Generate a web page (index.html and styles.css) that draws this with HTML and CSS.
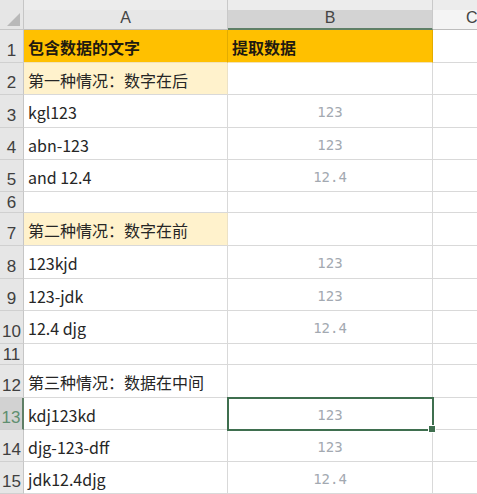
FILE: index.html
```html
<!DOCTYPE html>
<html>
<head>
  <title>提取数据</title>
  <meta name="viewport" content="width=device-width, initial-scale=1.0">
  <link rel="stylesheet" href="styles.css">
</head>
<body>
  <div class="sheet">
    <div class="corner"><span class="tri"></span></div>
    <div class="colhead">A</div>
    <div class="colhead selcol">B</div>
    <div class="colhead lastcol">C</div>

    <div class="rowhead">1</div>
    <div class="cell head">包含数据的文字</div>
    <div class="cell head">提取数据</div>
    <div class="cell end"></div>

    <div class="rowhead">2</div>
    <div class="cell note">第一种情况：数字在后</div>
    <div class="cell"></div>
    <div class="cell end"></div>

    <div class="rowhead">3</div>
    <div class="cell">kgl123</div>
    <div class="cell num">123</div>
    <div class="cell end"></div>

    <div class="rowhead">4</div>
    <div class="cell">abn-123</div>
    <div class="cell num">123</div>
    <div class="cell end"></div>

    <div class="rowhead">5</div>
    <div class="cell">and 12.4</div>
    <div class="cell num">12.4</div>
    <div class="cell end"></div>

    <div class="rowhead short">6</div>
    <div class="cell"></div>
    <div class="cell"></div>
    <div class="cell end"></div>

    <div class="rowhead">7</div>
    <div class="cell note">第二种情况：数字在前</div>
    <div class="cell"></div>
    <div class="cell end"></div>

    <div class="rowhead">8</div>
    <div class="cell">123kjd</div>
    <div class="cell num">123</div>
    <div class="cell end"></div>

    <div class="rowhead">9</div>
    <div class="cell">123-jdk</div>
    <div class="cell num">123</div>
    <div class="cell end"></div>

    <div class="rowhead">10</div>
    <div class="cell">12.4 djg</div>
    <div class="cell num">12.4</div>
    <div class="cell end"></div>

    <div class="rowhead short">11</div>
    <div class="cell"></div>
    <div class="cell"></div>
    <div class="cell end"></div>

    <div class="rowhead">12</div>
    <div class="cell">第三种情况：数据在中间</div>
    <div class="cell"></div>
    <div class="cell end"></div>

    <div class="rowhead selrow">13</div>
    <div class="cell">kdj123kd</div>
    <div class="cell num active">123<span class="handle"></span></div>
    <div class="cell end"></div>

    <div class="rowhead">14</div>
    <div class="cell">djg-123-dff</div>
    <div class="cell num">123</div>
    <div class="cell end"></div>

    <div class="rowhead">15</div>
    <div class="cell">jdk12.4djg</div>
    <div class="cell num">12.4</div>
    <div class="cell end"></div>
  </div>
</body>
</html>
```

FILE: styles.css
```css
body {
  margin: 0;
  background-color: #fff;
  font-family: "Noto Sans CJK SC", "Noto Sans", sans-serif;
  overflow: hidden;
}

.sheet {
  display: grid;
  grid-template-columns: 24px 204px 205px 1fr;
  grid-template-rows: 30px 33px 32px 33px 32px 32px 21px 33px 33px 32px 33px 21px 33px 32px 32px 32px;
  width: 477px;
  height: 494px;
}

.corner {
  position: relative;
  background-color: #e6e6e6;
  border-right: 1px solid #c6c6c6;
  border-bottom: 1px solid #c6c6c6;
  box-sizing: border-box;
}

.tri {
  position: absolute;
  right: 3px;
  bottom: 3px;
  width: 0;
  height: 0;
  border-left: 13px solid transparent;
  border-bottom: 13px solid #b9b9b9;
}

.colhead {
  background: linear-gradient(#ececec 0, #ececec 10px, #e7e7e7 10px);
  border-right: 1px solid #c9c9c9;
  border-bottom: 1px solid #bdbdbd;
  box-sizing: border-box;
  color: #444;
  font-family: "Liberation Sans", sans-serif;
  font-size: 16px;
  text-align: center;
  padding-top: 9px;
}

.selcol {
  background: linear-gradient(#ececec 0, #ececec 10px, #d3d3d3 10px);
  border-bottom: 2px solid #5f7f66;
}

.lastcol {
  background: linear-gradient(#ececec 0, #ececec 10px, #f4f4f4 10px);
  border-right: none;
  text-align: left;
  padding-left: 33px;
}

.rowhead {
  background-color: #e6e6e6;
  border-right: 1px solid #c6c6c6;
  border-bottom: 1px solid #d0d0d0;
  box-sizing: border-box;
  color: #404040;
  font-family: "Liberation Sans", sans-serif;
  font-size: 17px;
  text-align: center;
  display: flex;
  align-items: flex-end;
  justify-content: center;
  padding-bottom: 1px;
  line-height: 20px;
}

.rowhead.short {
  line-height: 18px;
  padding-bottom: 0;
}

.selrow {
  background-color: #d2d2d2;
  border-right: 2px solid #5f7f66;
  color: #5f8f70;
}

.cell {
  position: relative;
  border-right: 1px solid #d9d9d9;
  border-bottom: 1px solid #d9d9d9;
  box-sizing: border-box;
  font-size: 16px;
  color: #262626;
  padding-left: 4px;
  display: flex;
  align-items: center;
  white-space: nowrap;
  padding-top: 2px;
}

.cell.end {
  border-right: none;
}

.head {
  background-color: #ffc000;
  font-weight: bold;
  color: #1f1a10;
  border-right-color: #e3ac00;
  border-bottom-color: #f2e2b8;
}

.note {
  background-color: #fff2cc;
  border-right-color: #ece2c6;
}

.num {
  justify-content: center;
  padding-left: 0;
  font-family: "DejaVu Sans Mono", "Liberation Mono", monospace;
  font-size: 14px;
  color: #a3a9b1;
}

.active {
  outline: 2px solid #3f6f4f;
  outline-offset: -1px;
  z-index: 1;
}

.handle {
  position: absolute;
  right: -4px;
  bottom: -4px;
  width: 6px;
  height: 6px;
  background-color: #3f6f4f;
  border: 1px solid #fff;
}
```
